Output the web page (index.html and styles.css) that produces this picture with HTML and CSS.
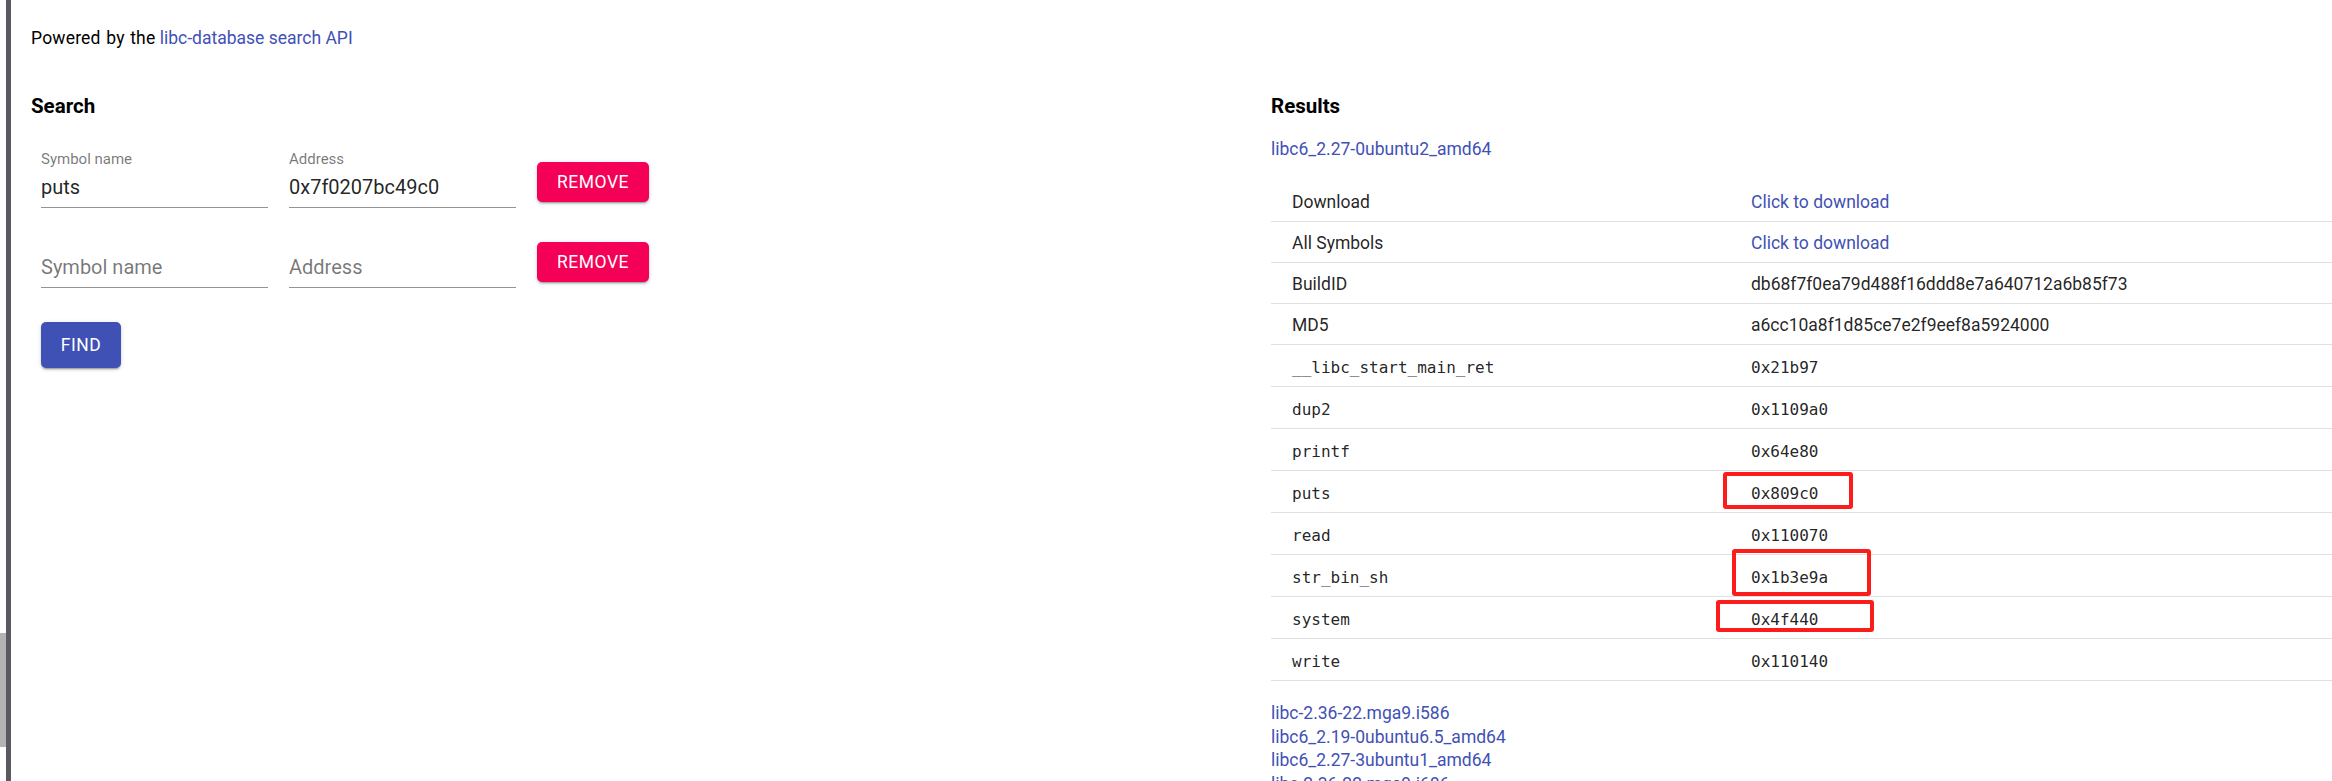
FILE: index.html
```html
<!DOCTYPE html>
<html lang="en">
<head>
<meta charset="utf-8">
<title>libc database search</title>
<link rel="stylesheet" href="styles.css">
</head>
<body>
<div class="page">
  <div class="edge">
    <div class="edge-track"><div class="edge-thumb"></div></div>
    <div class="edge-line"></div>
  </div>
  <div class="content">
    <p class="powered"><span class="powered-by">Powered by the</span> <a href="#">libc-database search API</a></p>
    <div class="columns">
      <section class="col">
        <h3 class="heading">Search</h3>
        <div class="rows">
          <div class="row">
            <div class="field">
              <span class="label">Symbol name</span>
              <div class="input">puts</div>
            </div>
            <div class="field">
              <span class="label">Address</span>
              <div class="input">0x7f0207bc49c0</div>
            </div>
            <button class="btn btn-remove">REMOVE</button>
          </div>
          <div class="row">
            <div class="field">
              <span class="label"></span>
              <div class="input placeholder">Symbol name</div>
            </div>
            <div class="field">
              <span class="label"></span>
              <div class="input placeholder">Address</div>
            </div>
            <button class="btn btn-remove">REMOVE</button>
          </div>
        </div>
        <button class="btn btn-find">FIND</button>
      </section>
      <section class="col">
        <h3 class="heading">Results</h3>
        <a class="lib-link" href="#">libc6_2.27-0ubuntu2_amd64</a>
        <div class="table-wrap">
          <table class="results">
            <tbody>
              <tr><td>Download</td><td><a href="#">Click to download</a></td></tr>
              <tr><td>All Symbols</td><td><a href="#">Click to download</a></td></tr>
              <tr><td>BuildID</td><td>db68f7f0ea79d488f16ddd8e7a640712a6b85f73</td></tr>
              <tr><td>MD5</td><td>a6cc10a8f1d85ce7e2f9eef8a5924000</td></tr>
              <tr class="mono"><td>__libc_start_main_ret</td><td>0x21b97</td></tr>
              <tr class="mono"><td>dup2</td><td>0x1109a0</td></tr>
              <tr class="mono"><td>printf</td><td>0x64e80</td></tr>
              <tr class="mono"><td>puts</td><td>0x809c0</td></tr>
              <tr class="mono"><td>read</td><td>0x110070</td></tr>
              <tr class="mono"><td>str_bin_sh</td><td>0x1b3e9a</td></tr>
              <tr class="mono"><td>system</td><td>0x4f440</td></tr>
              <tr class="mono"><td>write</td><td>0x110140</td></tr>
            </tbody>
          </table>
          <span class="mark mark-puts"></span>
          <span class="mark mark-binsh"></span>
          <span class="mark mark-system"></span>
        </div>
        <ul class="other-libs">
          <li><a href="#">libc-2.36-22.mga9.i586</a></li>
          <li><a href="#">libc6_2.19-0ubuntu6.5_amd64</a></li>
          <li><a href="#">libc6_2.27-3ubuntu1_amd64</a></li>
          <li><a href="#">libc-2.36-22.mga9.i686</a></li>
        </ul>
      </section>
    </div>
  </div>
</div>
</body>
</html>
```

FILE: styles.css
```css
html, body {
  margin: 0;
  padding: 0;
  background: #ffffff;
  overflow: hidden;
}

body {
  width: 2332px;
  height: 781px;
  font-family: Roboto, "Liberation Sans", Arial, sans-serif;
  font-size: 17.5px;
  color: rgba(0, 0, 0, 0.87);
}

a {
  color: #3f51b5;
  text-decoration: none;
}

.page {
  display: flex;
  height: 781px;
}

.edge {
  display: flex;
  flex-shrink: 0;
  width: 11px;
}

.edge-track {
  width: 6px;
}

.edge-thumb {
  margin-top: 633px;
  height: 114px;
  background: #b3b3b3;
}

.edge-line {
  width: 5px;
  background: #595a5e;
}

.content {
  flex: 1;
  padding: 26px 0 0 20px;
  min-width: 0;
}

.powered {
  margin: 0;
  line-height: 25px;
  color: #000;
}

.powered-by {
  letter-spacing: 0.2px;
  word-spacing: 1px;
}

.columns {
  display: grid;
  grid-template-columns: 1240px 1240px;
  margin-top: 43px;
}

.heading {
  margin: 0;
  font-size: 20.5px;
  line-height: 24px;
  font-weight: 700;
  color: #000;
}

/* search form */
.rows {
  display: flex;
  flex-direction: column;
  gap: 22px;
  margin-top: 32px;
  padding-left: 10px;
}

.row {
  display: flex;
  align-items: flex-start;
  gap: 21px;
}

.field {
  display: flex;
  flex-direction: column;
  width: 227px;
}

.label {
  display: block;
  height: 18px;
  font-size: 15px;
  line-height: 18px;
  color: rgba(0, 0, 0, 0.54);
  margin-bottom: 7px;
}

.input {
  font-size: 20px;
  line-height: 24px;
  padding-bottom: 8px;
  border-bottom: 1px solid rgba(0, 0, 0, 0.42);
  color: rgba(0, 0, 0, 0.87);
}

.input.placeholder {
  color: rgba(0, 0, 0, 0.54);
}

.btn {
  border: 0;
  border-radius: 5px;
  font-family: Roboto, "Liberation Sans", Arial, sans-serif;
  font-size: 17.5px;
  font-weight: 400;
  letter-spacing: 0.5px;
  color: #fff;
  padding: 0 20px;
  box-shadow: 0 3px 1px -2px rgba(0, 0, 0, 0.2), 0 2px 2px 0 rgba(0, 0, 0, 0.14), 0 1px 5px 0 rgba(0, 0, 0, 0.12);
  cursor: pointer;
}

.btn-remove {
  height: 40px;
  width: 112px;
  padding: 0;
  margin-top: 12px;
  background: #f50057;
}

.btn-find {
  display: block;
  height: 46px;
  width: 80px;
  margin: 34px 0 0 10px;
  padding: 0;
  background: #3f51b5;
}

/* results */
.lib-link {
  display: block;
  margin-top: 19px;
  line-height: 25px;
}

.table-wrap {
  position: relative;
  margin-top: 19px;
}

.results {
  width: 100%;
  border-collapse: collapse;
}

.results td {
  height: 25px;
  padding: 9px 0 6px 21px;
  line-height: 25px;
  border-bottom: 1px solid #e0e0e0;
  text-align: left;
  vertical-align: top;
  white-space: nowrap;
}

.results td:first-child {
  width: 438px;
}

.results tr.mono td {
  font-family: "DejaVu Sans Mono", "Liberation Mono", monospace;
  font-size: 16px;
  padding: 9.5px 0 6.5px 21px;
}

.mark {
  position: absolute;
  box-sizing: border-box;
  border: 4px solid #fb1c1c;
  border-radius: 3px;
}

.mark-puts {
  left: 452px;
  top: 291px;
  width: 130px;
  height: 37px;
}

.mark-binsh {
  left: 461px;
  top: 368px;
  width: 139px;
  height: 47px;
}

.mark-system {
  left: 445px;
  top: 419px;
  width: 158px;
  height: 32px;
}

.other-libs {
  list-style: none;
  margin: 21px 0 0;
  padding: 0;
  line-height: 23.5px;
}
```
